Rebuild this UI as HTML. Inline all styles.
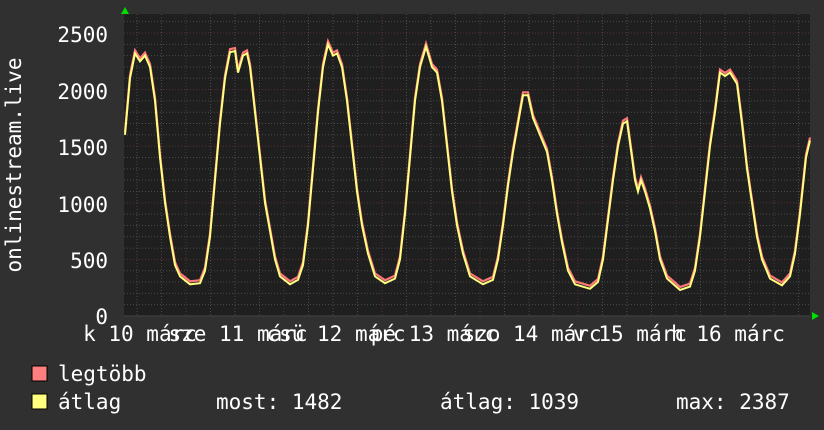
<!DOCTYPE html>
<html><head><meta charset="utf-8"><style>
html,body{margin:0;padding:0;background:#303030;}
svg{display:block}
text{font-family:"DejaVu Sans Mono","Liberation Mono",monospace;fill:#fff;font-size:21px}
</style></head><body>
<svg id="s" width="824" height="430" xmlns="http://www.w3.org/2000/svg">
<rect width="824" height="430" fill="#303030"/>
<rect x="124" y="14" width="686" height="302" fill="#1f1f1f"/>
<g id="grid"></g>
<polyline id="mx" fill="none" stroke="#ff7878" stroke-width="2.2"/>
<polyline id="av" fill="none" stroke="#ffff80" stroke-width="2"/>
<polygon points="121,14 125,7 129,14" fill="#00dd00"/>
<polygon points="812,312 819,316 812,320" fill="#00dd00"/>
<text x="108" y="42" text-anchor="end">2500</text>
<text x="108" y="99" text-anchor="end">2000</text>
<text x="108" y="155" text-anchor="end">1500</text>
<text x="108" y="212" text-anchor="end">1000</text>
<text x="108" y="268" text-anchor="end">500</text>
<text x="108" y="324" text-anchor="end">0</text>
<text transform="translate(21,165) rotate(-90)" text-anchor="middle">onlinestream.live</text>
<g text-anchor="middle">
<text x="140" y="341">k 10 márc</text>
<text x="238" y="341">sze 11 márc</text>
<text x="336" y="341">csü 12 márc</text>
<text x="434" y="341">pé 13 márc</text>
<text x="532" y="341">szo 14 márc</text>
<text x="630" y="341">v 15 márc</text>
<text x="728" y="341">h 16 márc</text>
</g>
<rect x="32" y="366" width="15" height="15" fill="#ff7f7f" stroke="#000" stroke-width="1"/>
<rect x="32" y="394" width="15" height="15" fill="#ffff7f" stroke="#000" stroke-width="1"/>
<text x="58" y="381">legtöbb</text>
<text x="58" y="409">átlag</text>
<text x="216" y="409">most: 1482</text>
<text x="440" y="409">átlag: 1039</text>
<text x="676" y="409">max: 2387</text>
</svg>
<script>
var g=document.getElementById('grid'),h='';
for(var v=100;v<=2600;v+=100){var y=316-v*0.1132;if(y<14)break;
h+='<line x1="124" x2="810" y1="'+y+'" y2="'+y+'" stroke="'+(v%500?'#4a4a4a':'#5a3030')+'" stroke-dasharray="1,2"/>';}
for(var x=186-98*2;x<810;x+=24.5){if(x<=124)continue;var maj=Math.abs(((x-186)%98+98)%98)<1;
h+='<line y1="14" y2="316" x1="'+x+'" x2="'+x+'" stroke="'+(maj?'#5a3030':'#4a4a4a')+'" stroke-dasharray="1,2"/>';}
h+='<line x1="124" x2="810" y1="316" y2="316" stroke="#444"/>';
g.innerHTML=h;
var k=[125,1600,130,2100,135,2320,140,2250,145,2300,150,2200,155,1900,160,1400,165,1000,170,700,175,450,180,350,190,280,200,290,205,400,210,700,215,1200,220,1700,225,2100,230,2330,235,2340,238,2150,243,2300,247,2320,250,2200,255,1800,260,1400,265,1000,270,750,275,500,280,350,290,280,298,320,303,450,308,800,313,1300,318,1800,323,2200,328,2400,333,2300,337,2320,342,2200,347,1900,352,1500,357,1100,362,800,368,550,375,350,385,290,395,330,400,500,405,900,410,1400,415,1900,420,2200,426,2380,432,2200,437,2150,442,1900,447,1500,452,1100,457,800,463,550,470,350,483,280,493,320,498,500,503,800,508,1150,513,1450,518,1700,523,1950,528,1950,533,1750,540,1600,547,1450,552,1200,557,900,562,650,568,400,575,280,590,240,598,300,603,500,608,850,613,1200,618,1500,623,1700,627,1720,632,1400,635,1200,638,1100,641,1200,645,1100,650,950,655,750,660,500,667,330,680,230,690,260,695,400,700,700,705,1100,710,1500,715,1800,720,2150,725,2120,730,2150,737,2050,742,1700,747,1300,752,1000,757,700,762,500,770,330,782,270,790,350,795,550,800,900,806,1400,810,1550];
var a='',m='';
for(var i=0;i<k.length;i+=2){var y=316-k[i+1]*0.1132;a+=k[i]+','+y.toFixed(1)+' ';m+=k[i]+','+(y-3).toFixed(1)+' ';}
document.getElementById('av').setAttribute('points',a);
document.getElementById('mx').setAttribute('points',m);
</script>
</body></html>
